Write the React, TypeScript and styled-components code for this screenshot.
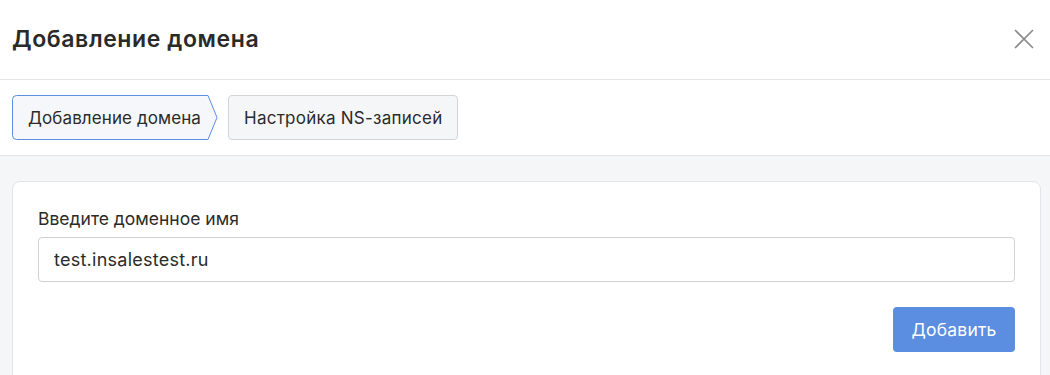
import React from "react";
import styled, { createGlobalStyle } from "styled-components";

const Global = createGlobalStyle`
  html, body { margin: 0; padding: 0; background: #ffffff; }
  body { font-family: Inter, "Noto Sans", sans-serif; color: #2b2b2b; }
  * { box-sizing: border-box; }
`;

const Modal = styled.div`
  width: 1050px;
  height: 375px;
  overflow: hidden;
  background: #ffffff;
  display: flex;
  flex-direction: column;
`;

const Header = styled.header`
  height: 80px;
  flex: none;
  display: flex;
  align-items: center;
  justify-content: space-between;
  padding: 0 12px 2px 12px;
  border-bottom: 1px solid #e6e6e6;
`;

const Title = styled.h1`
  margin: 0;
  font-size: 23px;
  font-weight: 600;
  color: #2a2a2a;
  letter-spacing: 0.6px;
`;

const CloseButton = styled.button`
  width: 24px;
  height: 24px;
  border: none;
  background: transparent;
  padding: 0;
  margin-right: 2px;
  display: flex;
  align-items: center;
  justify-content: center;
  cursor: pointer;
`;

const Steps = styled.nav`
  flex: none;
  display: flex;
  gap: 10px;
  padding: 15px 12px 15px 12px;
  border-bottom: 1px solid #e6e6e6;
`;

const Step = styled.div<{ $active?: boolean }>`
  position: relative;
  height: 45px;
  display: flex;
  align-items: center;
  padding: ${(p) => (p.$active ? "0 17px 0 16px" : "0 15px")};
  font-size: 17px;
  letter-spacing: ${(p) => (p.$active ? "0.1px" : "0.25px")};
  color: #2b2b2b;
  background: ${(p) => (p.$active ? "transparent" : "#f5f6f8")};
  border: ${(p) => (p.$active ? "none" : "1px solid #d2d4d8")};
  border-radius: 4px;
  white-space: nowrap;
`;

const StepShape = styled.svg`
  position: absolute;
  inset: 0;
  width: 100%;
  height: 100%;
  overflow: visible;
`;

const StepLabel = styled.span`
  position: relative;
`;

const Body = styled.main`
  flex: 1;
  background: #f5f6f8;
  padding: 25px 9px 0 12px;
`;

const Card = styled.section`
  background: #ffffff;
  border: 1px solid #e4e5e8;
  border-radius: 8px;
  padding: 25px 25px 30px 25px;
  display: flex;
  flex-direction: column;
`;

const Label = styled.label`
  font-size: 17.5px;
  color: #2b2b2b;
  line-height: 22px;
  margin-top: 1px;
  margin-bottom: 7px;
`;

const Input = styled.input`
  height: 45px;
  width: 100%;
  border: 1px solid #cfd1d5;
  border-radius: 4px;
  padding: 0 15px;
  font-family: Inter, "Noto Sans", sans-serif;
  font-size: 18px;
  letter-spacing: 0.25px;
  color: #2b2b2b;
  outline: none;
`;

const Actions = styled.div`
  display: flex;
  justify-content: flex-end;
  margin-top: 25px;
`;

const PrimaryButton = styled.button`
  height: 45px;
  width: 122px;
  padding: 0;
  border: none;
  border-radius: 4px;
  background: #5b8de0;
  color: #ffffff;
  font-family: Inter, "Noto Sans", sans-serif;
  font-size: 17.5px;
  letter-spacing: 0.2px;
  cursor: pointer;
`;

export default function App() {
  return (
    <>
      <Global />
      <Modal>
        <Header>
          <Title>Добавление домена</Title>
          <CloseButton aria-label="Закрыть">
            <svg width="20" height="20" viewBox="0 0 20 20">
              <path d="M1 1 L19 19 M19 1 L1 19" stroke="#8a8a8a" strokeWidth="1.6" fill="none" />
            </svg>
          </CloseButton>
        </Header>
        <Steps>
          <Step $active>
            <StepShape preserveAspectRatio="none" viewBox="0 0 206 45">
              <path
                d="M4.5 0.5 H196 L205 22.5 L196 44.5 H4.5 Q0.5 44.5 0.5 40.5 V4.5 Q0.5 0.5 4.5 0.5 Z"
                fill="#f5f7fa"
                stroke="#5b8de0"
                strokeWidth="1"
                strokeLinejoin="round"
                vectorEffect="non-scaling-stroke"
              />
            </StepShape>
            <StepLabel>Добавление домена</StepLabel>
          </Step>
          <Step>Настройка NS-записей</Step>
        </Steps>
        <Body>
          <Card>
            <Label htmlFor="domain">Введите доменное имя</Label>
            <Input id="domain" defaultValue="test.insalestest.ru" />
            <Actions>
              <PrimaryButton>Добавить</PrimaryButton>
            </Actions>
          </Card>
        </Body>
      </Modal>
    </>
  );
}
